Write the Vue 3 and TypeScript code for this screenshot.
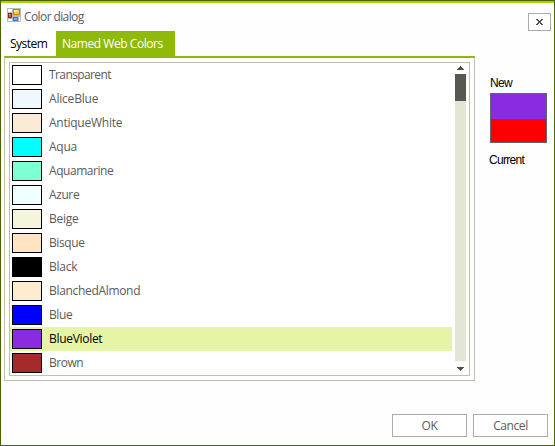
<script setup lang="ts">
import { ref } from 'vue'

interface NamedColor {
  name: string
  value: string
  tracking: number
}

const colors: NamedColor[] = [
  { name: 'Transparent', value: '#ffffff', tracking: -0.6 },
  { name: 'AliceBlue', value: '#f0f8ff', tracking: -0.2 },
  { name: 'AntiqueWhite', value: '#faebd7', tracking: -0.25 },
  { name: 'Aqua', value: '#00ffff', tracking: -0.25 },
  { name: 'Aquamarine', value: '#7fffd4', tracking: -0.45 },
  { name: 'Azure', value: '#f0ffff', tracking: -0.4 },
  { name: 'Beige', value: '#f5f5dc', tracking: -0.25 },
  { name: 'Bisque', value: '#ffe4c4', tracking: -0.4 },
  { name: 'Black', value: '#000000', tracking: -0.25 },
  { name: 'BlanchedAlmond', value: '#ffebcd', tracking: -0.32 },
  { name: 'Blue', value: '#0000ff', tracking: -0.4 },
  { name: 'BlueViolet', value: '#8a2be2', tracking: -0.3 },
  { name: 'Brown', value: '#a52a2a', tracking: -0.5 },
]
const selected = ref<NamedColor>(colors[11])
const current = '#ff0000'
</script>

<template>
  <div class="dialog">
    <header class="titlebar">
      <svg class="app-icon" width="14" height="14" viewBox="0 0 14 14" shape-rendering="crispEdges">
        <path d="M0 0h14v14H0z" fill="#b9b9b9" />
        <path d="M1 1h4v3H1zM1 11h4v2H1zM12 9h1v4h-1z" fill="#fafafa" />
        <path d="M1 5h4v5H1z" fill="#9e1a14" />
        <path d="M2 6h2v3H2z" fill="#e5523c" />
        <path d="M2 6h1v1H2z" fill="#f59a85" />
        <path d="M6 1h7v6H6z" fill="#c08410" />
        <path d="M7 2h5v4H7z" fill="#fbc83d" />
        <path d="M7 2h3v2H7z" fill="#ffe795" />
        <path d="M6 9h5v4H6z" fill="#3f70cf" />
        <path d="M7 10h3v2H7z" fill="#7fb0fa" />
      </svg>
      <span class="title">Color dialog</span>
      <button class="close" aria-label="Close">
        <svg width="7" height="6" viewBox="0 0 7 6" shape-rendering="crispEdges">
          <path d="M0 0h2v1H0zM5 0h2v1H5zM1 1h2v1H1zM4 1h2v1H4zM2 2h3v2H2zM1 4h2v1H1zM4 4h2v1H4zM0 5h2v1H0zM5 5h2v1H5z" fill="#50504a" />
        </svg>
      </button>
    </header>

    <main class="body">
      <section class="tabs">
        <nav class="tab-strip">
          <span class="tab">System</span>
          <span class="tab active">Named Web Colors</span>
        </nav>
        <div class="tab-page">
          <div class="list-box">
            <ul class="list">
              <li
                v-for="c in colors"
                :key="c.name"
                class="row"
                :class="{ selected: c.name === selected.name }"
                @click="selected = c"
              >
                <span class="swatch" :style="{ background: c.value }"></span>
                <span class="name" :style="{ letterSpacing: c.tracking + 'px' }">{{ c.name }}</span>
              </li>
            </ul>
            <div class="scrollbar">
              <svg width="7" height="4" viewBox="0 0 7 4" shape-rendering="crispEdges">
                <path d="M3 0h1v1H3zM2 1h3v1H2zM1 2h5v1H1zM0 3h7v1H0z" fill="#50504a" />
              </svg>
              <div class="track"><div class="thumb"></div></div>
              <svg width="7" height="4" viewBox="0 0 7 4" shape-rendering="crispEdges">
                <path d="M0 0h7v1H0zM1 1h5v1H1zM2 2h3v1H2zM3 3h1v1H3z" fill="#50504a" />
              </svg>
            </div>
          </div>
        </div>
      </section>

      <aside class="preview">
        <span class="label">New</span>
        <div class="compare">
          <div class="new" :style="{ background: selected.value }"></div>
          <div class="old" :style="{ background: current }"></div>
        </div>
        <span class="label current">Current</span>
      </aside>
    </main>

    <footer class="actions">
      <button class="btn ok">OK</button>
      <button class="btn cancel">Cancel</button>
    </footer>
  </div>
</template>

<style>
body {
  margin: 0;
}
</style>

<style scoped>
* {
  box-sizing: border-box;
}
.dialog {
  width: 555px;
  height: 446px;
  display: flex;
  flex-direction: column;
  border: 1px solid #4c6400;
  background: #fefefe;
  font-family: 'Open Sans', 'Noto Sans', sans-serif;
  font-size: 12px;
  line-height: 16px;
  color: #5b5b5b;
}
.titlebar {
  height: 30px;
  flex: none;
  display: flex;
  align-items: flex-start;
  border-top: 2px solid #a7d500;
  padding-left: 6px;
  padding-right: 3px;
}
.app-icon {
  margin-top: 5px;
}
.title {
  margin: 6px 0 0 3px;
  letter-spacing: -0.6px;
}
.close {
  margin: 10px 0 0 auto;
  width: 23px;
  height: 18px;
  flex: none;
  padding: 0;
  border: 1px solid #ababab;
  background: #fff;
  display: flex;
  align-items: center;
  justify-content: center;
}
.body {
  display: flex;
  align-items: flex-start;
  padding-left: 3px;
}
.tabs {
  width: 471px;
}
.tab-strip {
  height: 25px;
  display: flex;
}
.tab {
  width: 52px;
  padding: 5px 0 0 6px;
  background: #fff;
  color: #000;
  letter-spacing: -0.5px;
  white-space: nowrap;
}
.tab.active {
  width: 119px;
  background: #8fb90b;
  color: #fff;
  letter-spacing: -0.45px;
}
.tab-page {
  height: 325px;
  border: 1px solid #c0c0ae;
  border-top: 2px solid #8fb90b;
  padding: 4px;
  background: #fff;
}
.list-box {
  height: 314px;
  width: 461px;
  border: 1px solid #c0c0ae;
  display: flex;
}
.list {
  list-style: none;
  margin: 0;
  padding: 0;
  width: 442px;
}
.row {
  height: 24px;
  display: flex;
  align-items: center;
  padding-left: 2px;
  gap: 7px;
}
.row.selected {
  background: #e6f5a5;
  color: #000;
}
.swatch {
  width: 30px;
  height: 20px;
  border: 1px solid #000;
}
.scrollbar {
  width: 11px;
  margin-left: 3px;
  padding: 3px 0 4px;
  display: flex;
  flex-direction: column;
  align-items: center;
}
.track {
  width: 11px;
  height: 287px;
  margin: 4px 0 6px;
  background: #e3e6d4;
}
.thumb {
  height: 27px;
  background: #585852;
}
.preview {
  margin: 44px 0 0 15px;
  width: 57px;
  color: #000;
}
.label {
  display: block;
  font-family: 'Liberation Sans', sans-serif;
  font-size: 12px;
  letter-spacing: -0.7px;
}
.compare {
  height: 50px;
  margin-top: 2px;
  border: 1px solid #646464;
}
.new {
  height: 25px;
}
.old {
  height: 23px;
}
.current {
  margin: 9px 0 0 -1px;
}
.actions {
  margin-top: auto;
  display: flex;
  justify-content: flex-end;
  gap: 6px;
  padding: 0 6px 8px 0;
}
.btn {
  width: 75px;
  height: 23px;
  padding: 0;
  border: 1px solid #ababab;
  background: #fff;
  font: inherit;
  letter-spacing: -0.4px;
  color: #5b5b5b;
}
</style>
